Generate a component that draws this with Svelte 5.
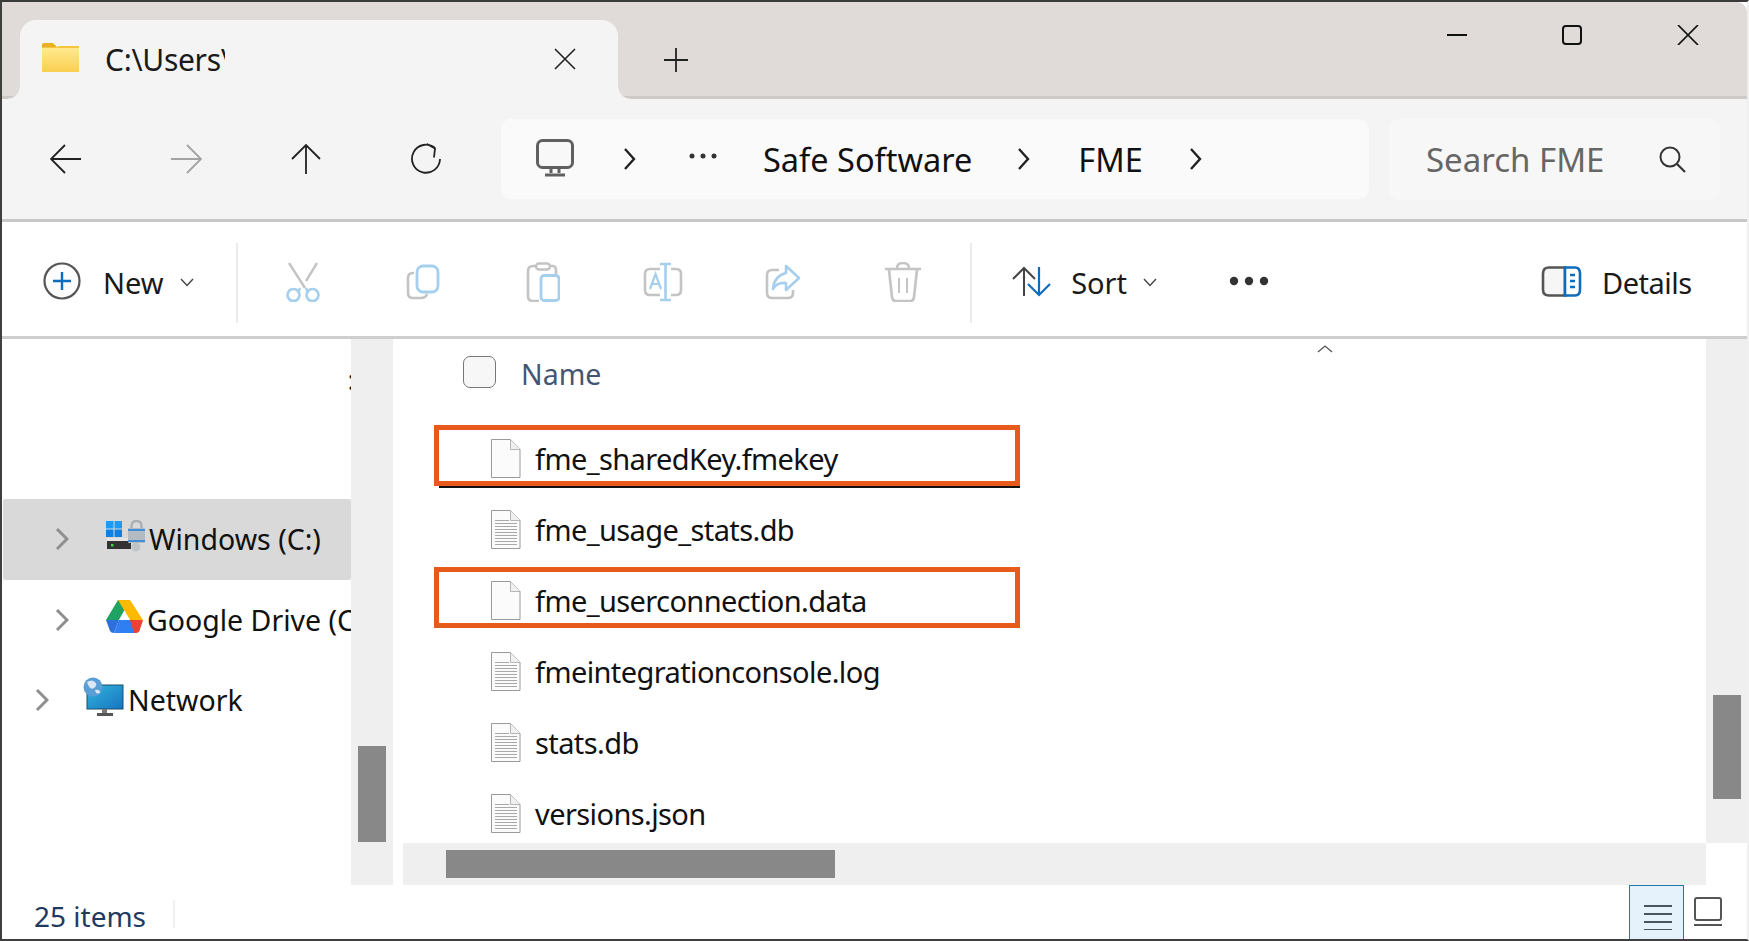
<script>
    const files = [
        { name: "fme_sharedKey.fmekey", marked: true, first: true },
        { name: "fme_usage_stats.db", lines: true },
        { name: "fme_userconnection.data", marked: true },
        { name: "fmeintegrationconsole.log", lines: true },
        { name: "stats.db", lines: true },
        { name: "versions.json", lines: true }
    ];
    const textLines = [10, 13, 16, 19, 22, 25, 28, 31, 34];
</script>

<div class="window">
    <!-- title bar -->
    <div class="titlebar">
        <div class="tab">
            <svg class="folder" width="37" height="29" viewBox="0 0 37 29">
                <defs>
                    <linearGradient id="fold" x1="0" y1="0" x2="0" y2="1">
                        <stop offset="0" stop-color="#ffe98f" />
                        <stop offset="1" stop-color="#fbcf50" />
                    </linearGradient>
                </defs>
                <path d="M0 2q0-2 2-2h9l4 4h-15z" fill="#eab01f" />
                <path d="M0 5h37v24h-37z" fill="url(#fold)" />
                <path d="M0 4h15l2-1h20v2h-37z" fill="#f5c53c" />
            </svg>
            <span class="tab-title">C:\Users\</span>
            <svg class="tab-x" width="22" height="22" viewBox="0 0 22 22">
                <path d="M1 1l20 20M21 1l-20 20" stroke="#222" stroke-width="1.6" fill="none" />
            </svg>
        </div>
        <svg class="plus" width="24" height="24" viewBox="0 0 24 24">
            <path d="M12 0v24M0 12h24" stroke="#222" stroke-width="1.8" fill="none" />
        </svg>
        <div class="win-controls">
            <svg width="20" height="20" viewBox="0 0 20 20"><path d="M0 10h20" stroke="#111" stroke-width="2" /></svg>
            <svg width="20" height="20" viewBox="0 0 20 20"><rect x="1" y="1" width="18" height="18" rx="3" fill="none" stroke="#111" stroke-width="2" /></svg>
            <svg width="22" height="20" viewBox="0 0 22 20"><path d="M1 0l20 20M21 0l-20 20" stroke="#111" stroke-width="1.7" fill="none" /></svg>
        </div>
    </div>

    <!-- navigation row -->
    <div class="navrow">
        <div class="navbtn">
            <svg width="32" height="30" viewBox="0 0 32 30"><path d="M31 15h-29M15 1l-14 14 14 14" stroke="#222" stroke-width="1.8" fill="none" /></svg>
        </div>
        <div class="navbtn">
            <svg width="32" height="30" viewBox="0 0 32 30"><path d="M1 15h29M17 1l14 14-14 14" stroke="#a3a3a3" stroke-width="1.8" fill="none" /></svg>
        </div>
        <div class="navbtn">
            <svg width="30" height="32" viewBox="0 0 30 32"><path d="M15 31v-29M1 16l14-14 14 14" stroke="#222" stroke-width="1.8" fill="none" /></svg>
        </div>
        <div class="navbtn">
            <svg width="32" height="32" viewBox="0 0 32 32"><path d="M25 5a14 14 0 1 0 5 11M17 1l8 4.500-1 9" stroke="#222" stroke-width="1.8" fill="none" /></svg>
        </div>

        <div class="address">
            <svg class="monitor" width="38" height="38" viewBox="0 0 38 38">
                <rect x="1.500" y="1.500" width="35" height="27" rx="5" fill="#f8f8f8" stroke="#606060" stroke-width="3" />
                <path d="M15 29v5M23 29v5" stroke="#606060" stroke-width="3" />
                <path d="M9 36h20" stroke="#606060" stroke-width="3" />
            </svg>
            <svg class="crumb first" width="13" height="22" viewBox="0 0 13 22"><path d="M2 1l9 10-9 10" stroke="#222" stroke-width="2.400" fill="none" /></svg>
            <svg class="dots" width="28" height="6" viewBox="0 0 28 6"><circle cx="3" cy="3" r="2.500" fill="#333" /><circle cx="14" cy="3" r="2.500" fill="#333" /><circle cx="25" cy="3" r="2.500" fill="#333" /></svg>
            <span class="path-safe">Safe Software</span>
            <svg class="crumb" width="13" height="22" viewBox="0 0 13 22"><path d="M2 1l9 10-9 10" stroke="#222" stroke-width="2.400" fill="none" /></svg>
            <span class="path-fme">FME</span>
            <svg class="crumb" width="13" height="22" viewBox="0 0 13 22"><path d="M2 1l9 10-9 10" stroke="#222" stroke-width="2.400" fill="none" /></svg>
        </div>

        <div class="search">
            <span>Search FME</span>
            <svg width="27" height="27" viewBox="0 0 27 27"><circle cx="11" cy="11" r="9.500" fill="none" stroke="#333" stroke-width="2" /><path d="M18 18l8 8" stroke="#333" stroke-width="2.200" /></svg>
        </div>
    </div>

    <!-- command bar -->
    <div class="toolbar">
        <svg class="new-icon" width="38" height="38" viewBox="0 0 38 38">
            <circle cx="19" cy="19" r="17.500" fill="#fdfdfd" stroke="#555" stroke-width="2.200" />
            <path d="M19 10v18M10 19h18" stroke="#0f6cbd" stroke-width="2.400" />
        </svg>
        <span class="new-label">New</span>
        <svg class="chev" width="14" height="9" viewBox="0 0 14 9"><path d="M1 1l6 6.500 6-6.500" stroke="#444" stroke-width="1.400" fill="none" /></svg>
        <i class="sep first-sep"></i>

        <div class="toolbtn">
            <svg width="34" height="40" viewBox="0 0 34 40">
                <path d="M3 1l16 25M31 1l-11 18" stroke="#c4c4c4" stroke-width="2.400" fill="none" />
                <path d="M14 26l-2 5M20 26l2 5" stroke="#a6cfee" stroke-width="2.400" />
                <ellipse cx="7.500" cy="33" rx="6" ry="6" fill="none" stroke="#a6cfee" stroke-width="2.600" />
                <ellipse cx="26.500" cy="33" rx="6" ry="6" fill="none" stroke="#a6cfee" stroke-width="2.600" />
            </svg>
        </div>
        <div class="toolbtn">
            <svg width="34" height="36" viewBox="0 0 34 36">
                <path d="M8 9h-1q-5 0-5 5v15q0 5 5 5h8q5 0 6-4" stroke="#c4c4c4" stroke-width="2.600" fill="none" />
                <rect x="11" y="2" width="21" height="26" rx="6" fill="none" stroke="#a6cfee" stroke-width="2.800" />
            </svg>
        </div>
        <div class="toolbtn">
            <svg width="34" height="40" viewBox="0 0 34 40">
                <path d="M10 4h-3q-5 0-5 5v25q0 5 5 5h6M24 4h3q3 0 3 5v3" stroke="#c4c4c4" stroke-width="2.600" fill="none" />
                <rect x="10" y="1.500" width="14" height="6" rx="3" fill="none" stroke="#c4c4c4" stroke-width="2.400" />
                <rect x="15" y="13.500" width="18" height="25" rx="3" fill="none" stroke="#a6cfee" stroke-width="2.800" />
            </svg>
        </div>
        <div class="toolbtn">
            <svg width="40" height="40" viewBox="0 0 40 40">
                <path d="M17 7h-10q-5 0-5 5v16q0 5 5 5h10M28 7h5q5 0 5 5v16q0 5-5 5h-5" stroke="#c4c4c4" stroke-width="2.600" fill="none" />
                <path d="M22.500 2v36M17 2h11M17 38h11" stroke="#a6cfee" stroke-width="2.600" fill="none" />
                <path d="M7 27l5.500-15 5.500 15M9 22h7" stroke="#a6cfee" stroke-width="2.200" fill="none" />
            </svg>
        </div>
        <div class="toolbtn">
            <svg width="36" height="36" viewBox="0 0 36 36">
                <path d="M14 6h-7q-5 0-5 5v18q0 5 5 5h16q5 0 5-5v-3" stroke="#c4c4c4" stroke-width="2.600" fill="none" />
                <path d="M21 2l13 12-13 12v-7q-9-1-13 6 1-13 13-16z" fill="none" stroke="#a6cfee" stroke-width="2.600" stroke-linejoin="round" />
            </svg>
        </div>
        <div class="toolbtn">
            <svg width="38" height="40" viewBox="0 0 38 40">
                <path d="M1 7h36M13 6q0-5 6-5t6 5" stroke="#c4c4c4" stroke-width="2.400" fill="none" />
                <path d="M5 8l3 27q.5 4 4 4h14q3.500 0 4-4l3-27" stroke="#c4c4c4" stroke-width="2.600" fill="none" />
                <path d="M15 16v15M23 16v15" stroke="#c4c4c4" stroke-width="2" />
            </svg>
        </div>

        <i class="sep second-sep"></i>

        <svg class="sort-icon" width="40" height="31" viewBox="0 0 40 31">
            <path d="M12 30v-28M1 13l11-11 11 11" stroke="#444" stroke-width="2" fill="none" />
            <path d="M27 1v28M16 18l11 11 11-11" stroke="#0f6cbd" stroke-width="2.200" fill="none" />
        </svg>
        <span class="sort-label">Sort</span>
        <svg class="chev" width="14" height="9" viewBox="0 0 14 9"><path d="M1 1l6 6.500 6-6.500" stroke="#444" stroke-width="1.400" fill="none" /></svg>
        <svg class="more" width="40" height="10" viewBox="0 0 40 10"><circle cx="5" cy="5" r="4.200" fill="#333" /><circle cx="20" cy="5" r="4.200" fill="#333" /><circle cx="35" cy="5" r="4.200" fill="#333" /></svg>

        <svg class="details-icon" width="41" height="31" viewBox="0 0 41 31">
            <path d="M24 1.500h-16q-6 0-6 6v16q0 6 6 6h16z" fill="#f6f6f6" stroke="#555" stroke-width="2.600" />
            <path d="M24 1.500h10q5 0 5 6v16q0 6-5 6h-10z" fill="#fff" stroke="#0f6cbd" stroke-width="2.600" />
            <path d="M29 9h5M29 15h5M29 21h5" stroke="#0f6cbd" stroke-width="2.600" />
        </svg>
        <span class="details-label">Details</span>
    </div>

    <!-- main area -->
    <div class="main">
        <div class="sidebar">
            <div class="side-top">:</div>
            <div class="side-row selected">
                <svg class="side-chev" width="14" height="24" viewBox="0 0 14 24"><path d="M2 2l10 10-10 10" stroke="#8f8f8f" stroke-width="3" fill="none" /></svg>
                <svg class="side-icon" width="39" height="32" viewBox="0 0 39 32">
                    <rect x="0" y="1" width="7.500" height="7.500" fill="#1e9bf0" /><rect x="8.500" y="1" width="7.500" height="7.500" fill="#1e9bf0" />
                    <rect x="0" y="9.500" width="7.500" height="7.500" fill="#0f7fe0" /><rect x="8.500" y="9.500" width="7.500" height="7.500" fill="#0f7fe0" />
                    <path d="M1 18h24v11h-24z" fill="#333" />
                    <path d="M1 18h24v3h-24z" fill="#e4e4e4" />
                    <rect x="5" y="24" width="2.500" height="2.500" fill="#3ddc3d" />
                    <path d="M25.500 9v-3q0-5 5-5t5 5v3" fill="none" stroke="#a9afb5" stroke-width="2.400" />
                    <rect x="22" y="8" width="17" height="15" rx="1" fill="#b4bac1" />
                    <path d="M22 9h17v2h-17zM22 20h17v2h-17z" fill="#3e8fd6" />
                    <circle cx="30" cy="27" r="4.500" fill="#bfc4c9" />
                </svg>
                <span class="side-label">Windows (C:)</span>
            </div>
            <div class="side-row">
                <svg class="side-chev" width="14" height="24" viewBox="0 0 14 24"><path d="M2 2l10 10-10 10" stroke="#8f8f8f" stroke-width="3" fill="none" /></svg>
                <svg class="side-icon" width="37" height="34" viewBox="0 0 37 34">
                    <path d="M12 0h12l-11 20h-13z" fill="#1ea362" />
                    <path d="M24 0l13 20h-13l-12-20z" fill="#ffba00" />
                    <path d="M0 20h13l-5 13q-3 0-4-2z" fill="#2d6fdc" />
                    <path d="M13 20h11l-4 13h-12z" fill="#4285f4" />
                    <path d="M24 20h13l-3.500 11q-1 2-3.500 2h-10z" fill="#ea4335" />
                    <path d="M18.500 11l5.500 9h-11z" fill="#fff" />
                    <path d="M9 33l4-13h11l4 13z" fill="#2f7ef2" />
                </svg>
                <span class="side-label">Google Drive (C</span>
            </div>
            <div class="side-row network">
                <svg class="side-chev" width="14" height="24" viewBox="0 0 14 24"><path d="M2 2l10 10-10 10" stroke="#8f8f8f" stroke-width="3" fill="none" /></svg>
                <svg class="side-icon" width="41" height="40" viewBox="0 0 41 40">
                    <defs>
                        <linearGradient id="scr" x1="0" y1="0" x2="1" y2="1">
                            <stop offset="0" stop-color="#33b5dd" />
                            <stop offset="1" stop-color="#1674c0" />
                        </linearGradient>
                    </defs>
                    <rect x="4" y="8" width="36" height="24" fill="url(#scr)" stroke="#1c4f6b" />
                    <path d="M19 32h5v4h-5z" fill="#777" /><path d="M14 36h16v3h-16z" fill="#555" />
                    <circle cx="10" cy="10" r="9.500" fill="#5a9ed6" />
                    <path d="M4 5q5-3 8 0t-1 6-7-6zM12 13q5-1 5 3-4 2-5-3z" fill="#d9e8f3" />
                </svg>
                <span class="side-label">Network</span>
            </div>
        </div>

        <div class="side-track"><div class="side-thumb"></div></div>

        <div class="pane">
            <div class="pane-top">
                <div class="list">
                    <div class="head">
                        <span class="check"></span>
                        <span class="col-name">Name</span>
                        <svg class="caret" width="16" height="8" viewBox="0 0 16 8"><path d="M1 7l7-6 7 6" stroke="#555" stroke-width="1.300" fill="none" /></svg>
                    </div>
                    {#each files as file}
                        <div class="file" class:marked={file.marked} class:first={file.first}>
                            <svg class="file-icon" width="30" height="39" viewBox="0 0 30 39">
                                <path d="M.5.5h19l9.500 10v28h-28.500z" fill="#fbfbfb" stroke="#9a9a9a" />
                                <path d="M19.500.5v10h9.500" fill="#f0f0f0" stroke="#b5b5b5" />
                                {#if file.lines}
                                    {#each textLines as y}
                                        <path d="M4 {y}.5h{y < 11 ? 14 : 22}" stroke="#a8a8a8" />
                                    {/each}
                                {/if}
                            </svg>
                            <span class="file-name">{file.name}</span>
                        </div>
                    {/each}
                </div>
                <div class="v-track"><div class="v-thumb"></div></div>
            </div>
            <div class="h-track"><div class="h-thumb"></div></div>
        </div>
    </div>

    <!-- status bar -->
    <div class="status">
        <span class="count">25 items</span>
        <i class="status-sep"></i>
        <div class="view-btn active">
            <svg width="28" height="26" viewBox="0 0 28 26"><path d="M0 2h28M0 10h28M0 18h28M0 26h28" stroke="#4a5560" stroke-width="2" /></svg>
        </div>
        <svg class="tiles" width="28" height="29" viewBox="0 0 28 29">
            <rect x="1" y="1" width="26" height="22" rx="2" fill="none" stroke="#555" stroke-width="2" />
            <path d="M0 28h28" stroke="#555" stroke-width="2" />
        </svg>
    </div>
</div>

<style>
    :global(body) {
        margin: 0;
        background: #fff;
    }

    * {
        box-sizing: border-box;
    }

    .window {
        width: 1749px;
        height: 941px;
        display: flex;
        flex-direction: column;
        overflow: hidden;
        background: #fff;
        border-top: 2px solid #3a3a3a;
        border-left: 2px solid #3f3f3f;
        border-right: 2px solid #f0f0f0;
        border-bottom: 2px solid #3f3f3f;
        font-family: "Noto Sans", "Open Sans", sans-serif;
        color: #111;
    }

    /* title bar */
    .titlebar {
        height: 97px;
        flex: none;
        display: flex;
        background: #e0dad8;
        border-bottom: 3px solid #cdc9c7;
        border-top-right-radius: 10px;
    }

    .tab {
        position: relative;
        width: 598px;
        height: 79px;
        margin: 18px 0 -3px 18px;
        padding: 23px 0 0 22px;
        display: flex;
        align-items: flex-start;
        background: #f5f4f4;
        border-radius: 16px 16px 0 0;
    }

    /* little inverted corners at the foot of the tab */
    .tab::before,
    .tab::after {
        content: "";
        position: absolute;
        bottom: 0;
        width: 12px;
        height: 12px;
    }

    .tab::before {
        left: -12px;
        background: radial-gradient(circle at 0 0, transparent 11px, #f5f4f4 12px);
    }

    .tab::after {
        right: -12px;
        background: radial-gradient(circle at 100% 0, transparent 11px, #f5f4f4 12px);
    }

    .folder {
        flex: none;
    }

    .tab-title {
        width: 120px;
        margin: -2px 0 0 26px;
        overflow: hidden;
        white-space: nowrap;
        font-size: 30px;
        letter-spacing: -0.3px;
        line-height: 38px;
        color: #1a1a1a;
    }

    .tab-x {
        margin: 5px 0 0 329px;
    }

    .plus {
        margin: 46px 0 0 46px;
    }

    .win-controls {
        margin: 23px 0 0 759px;
        display: flex;
        gap: 95px;
    }

    /* nav row */
    .navrow {
        height: 123px;
        flex: none;
        display: flex;
        align-items: center;
        padding: 0 0 0 4px;
        background: #f5f4f4;
        border-bottom: 3px solid #c9c7c5;
    }

    .navbtn {
        width: 120px;
        display: flex;
        justify-content: center;
    }

    .address {
        width: 868px;
        height: 80px;
        margin-left: 15px;
        padding-left: 35px;
        display: flex;
        align-items: center;
        background: #fbfafa;
        border-radius: 10px;
        font-size: 32.500px;
    }

    .monitor {
        margin-top: -2px;
    }

    .crumb.first {
        margin-left: 49px;
    }

    .dots {
        margin: -6px 0 0 53px;
    }

    .path-safe {
        margin-left: 46px;
    }

    .path-safe + .crumb {
        margin-left: 45px;
    }

    .path-fme {
        margin-left: 48px;
    }

    .path-fme + .crumb {
        margin-left: 46px;
    }

    .search {
        width: 331px;
        height: 81px;
        margin-left: 20px;
        padding: 0 34px 0 37px;
        display: flex;
        align-items: center;
        justify-content: space-between;
        background: #f8f7f7;
        border-radius: 10px;
        font-size: 33px;
        color: #666;
    }

    /* command bar */
    .toolbar {
        height: 117px;
        flex: none;
        display: flex;
        align-items: center;
        padding: 7px 0 0 41px;
        border-bottom: 3px solid #d0cecc;
        font-size: 29px;
        color: #1a1a1a;
    }

    .new-icon {
        margin-top: -4px;
    }

    .new-label {
        margin-left: 22px;
    }

    .chev {
        margin-left: 16px;
        margin-top: -1px;
    }

    .sep {
        width: 2px;
        height: 80px;
        background: #ececec;
    }

    .first-sep {
        margin-left: 42.500px;
        margin-right: 5px;
    }

    .second-sep {
        margin-left: 7px;
    }

    .toolbtn {
        width: 120px;
        display: flex;
        justify-content: center;
        margin-top: -2px;
    }

    .sort-icon {
        margin-left: 40px;
        margin-top: -2px;
    }

    .sort-label {
        margin-left: 19px;
    }

    .more {
        margin: -3px 0 0 72px;
    }

    .details-icon {
        margin: -2px 0 0 272px;
    }

    .details-label {
        margin-left: 20px;
        letter-spacing: -0.5px;
    }

    /* main area */
    .main {
        flex: 1;
        min-height: 0;
        display: flex;
    }

    .sidebar {
        width: 349px;
        flex: none;
        overflow: hidden;
        font-size: 28.500px;
    }

    .side-top {
        height: 160px;
        padding-top: 20px;
        text-align: right;
        line-height: 40px;
        font-size: 28px;
        color: #111;
        margin-right: -4px;
    }

    .side-row {
        height: 80.500px;
        display: flex;
        align-items: center;
        padding-left: 53px;
        white-space: nowrap;
    }

    .side-row.selected {
        background: #d9d9d9;
        margin-left: 1px;
        padding-left: 52px;
        border-radius: 2px;
    }

    .side-row.network {
        padding-left: 33px;
    }

    .side-chev {
        flex: none;
    }

    .side-icon {
        margin-left: 37px;
        margin-top: -6px;
        flex: none;
    }

    .network .side-icon {
        margin-left: 34px;
    }

    .side-label {
        margin-left: 4px;
    }

    .side-track {
        width: 42px;
        flex: none;
        padding: 407px 7px 0;
        background: #efefef;
    }

    .side-thumb {
        width: 28px;
        height: 96px;
        background: #888;
    }

    .pane {
        flex: 1;
        min-width: 0;
        display: flex;
        flex-direction: column;
        margin-left: 5px;
    }

    .pane-top {
        flex: 1;
        min-height: 0;
        display: flex;
    }

    .list {
        flex: 1;
        min-width: 0;
        overflow: hidden;
    }

    .head {
        height: 86px;
        display: flex;
        padding: 17px 0 0 65px;
    }

    .check {
        width: 33px;
        height: 32px;
        background: #f7f7f7;
        border: 1.500px solid #777;
        border-radius: 7px;
    }

    .col-name {
        margin: -1px 0 0 25px;
        font-size: 28.500px;
        line-height: 38px;
        color: #44566f;
    }

    .caret {
        margin: -11px 0 0 716px;
    }

    .file {
        width: 586px;
        height: 61px;
        margin: 0 0 10px 36px;
        padding-left: 52px;
        display: flex;
        align-items: center;
        border: 5px solid transparent;
        font-size: 29px;
        letter-spacing: -0.6px;
    }

    .file.marked {
        border-color: #e8591c;
    }

    .file.first {
        box-shadow: 2.500px 4.500px 0 -2.500px #111;
    }

    .file-icon {
        flex: none;
        margin-top: 5px;
    }

    .file-name {
        margin: 6px 0 0 14px;
        white-space: nowrap;
    }

    .v-track {
        width: 41px;
        flex: none;
        padding: 356px 7px 0;
        background: #efefef;
    }

    .v-thumb {
        width: 28px;
        height: 104px;
        background: #888;
    }

    .h-track {
        height: 42px;
        flex: none;
        margin: 0 41px 0 5px;
        padding: 7px 0 0 43px;
        background: #efefef;
    }

    .h-thumb {
        width: 389px;
        height: 28px;
        background: #888;
    }

    /* status bar */
    .status {
        height: 54px;
        flex: none;
        display: flex;
        padding-left: 32px;
        color: #1f3a5f;
    }

    .count {
        font-size: 28px;
        line-height: 62px;
        width: 139px;
    }

    .status-sep {
        width: 2px;
        height: 28px;
        margin-top: 15px;
        background: #f0f0f0;
    }

    .view-btn {
        width: 55px;
        margin-left: 1454px;
        padding: 18px 0 0 14px;
        background: #e5f1fb;
        border: 1.500px solid #1f7aa3;
        border-bottom: 0;
    }

    .view-btn svg {
        display: block;
    }

    .tiles {
        margin: 12px 0 0 10px;
    }
</style>
